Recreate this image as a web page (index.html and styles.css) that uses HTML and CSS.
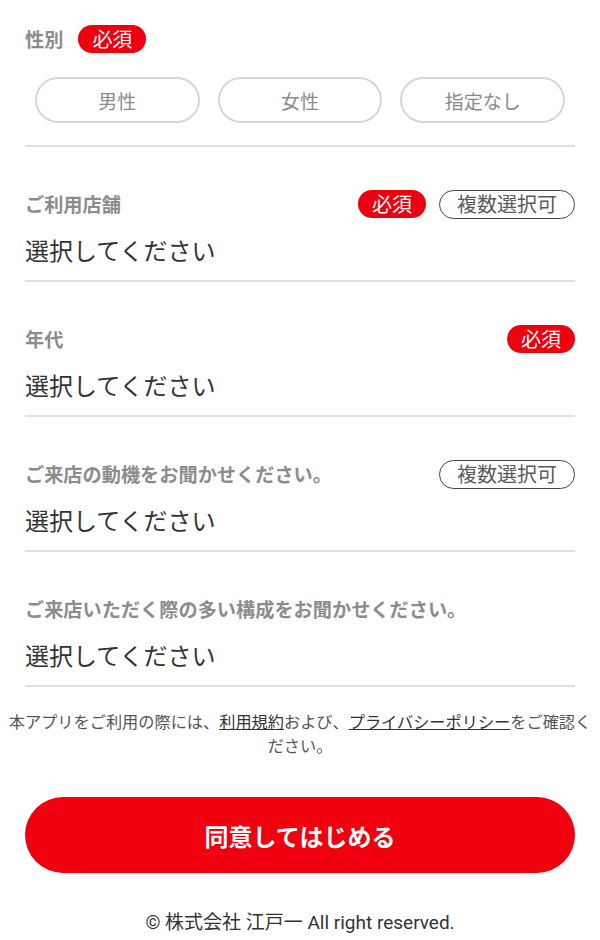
FILE: index.html
```html
<!DOCTYPE html>
<html lang="ja">
<head>
<meta charset="utf-8">
<title>登録</title>
<link rel="stylesheet" href="styles.css">
</head>
<body>
<main class="page">
  <section class="field field--gender">
    <div class="field-head field-head--inline">
      <span class="label">性別</span>
      <span class="badge badge--req">必須</span>
    </div>
    <div class="choices">
      <button class="choice" type="button">男性</button>
      <button class="choice" type="button">女性</button>
      <button class="choice" type="button">指定なし</button>
    </div>
  </section>

  <section class="field">
    <div class="field-head">
      <span class="label">ご利用店舗</span>
      <span class="badges">
        <span class="badge badge--req">必須</span>
        <span class="badge badge--multi">複数選択可</span>
      </span>
    </div>
    <div class="select">選択してください</div>
  </section>

  <section class="field">
    <div class="field-head">
      <span class="label">年代</span>
      <span class="badges">
        <span class="badge badge--req">必須</span>
      </span>
    </div>
    <div class="select">選択してください</div>
  </section>

  <section class="field">
    <div class="field-head">
      <span class="label">ご来店の動機をお聞かせください。</span>
      <span class="badges">
        <span class="badge badge--multi">複数選択可</span>
      </span>
    </div>
    <div class="select">選択してください</div>
  </section>

  <section class="field">
    <div class="field-head">
      <span class="label">ご来店いただく際の多い構成をお聞かせください。</span>
    </div>
    <div class="select">選択してください</div>
  </section>

  <p class="terms">本アプリをご利用の際には、<a href="#" class="link">利用規約</a>および、<a href="#" class="link">プライバシーポリシー</a>をご確認ください。</p>

  <div class="actions">
    <button class="primary" type="button">同意してはじめる</button>
  </div>

  <footer class="footer">© 株式会社 江戸一 All right reserved.</footer>
</main>
</body>
</html>
```

FILE: styles.css
```css
* {
  box-sizing: border-box;
}

html, body {
  margin: 0;
  padding: 0;
  background: #ffffff;
}

body {
  font-family: "Noto Sans CJK JP", "Noto Sans", Roboto, sans-serif;
  color: #333333;
}

.page {
  width: 600px;
  padding: 25px 0 0;
}

.field {
  margin: 0 25px;
  padding-top: 43px;
  border-bottom: 2px solid #dedede;
}

.field--gender {
  padding-top: 0;
  padding-bottom: 22px;
}

.field-head {
  display: flex;
  align-items: center;
  justify-content: space-between;
  height: 28px;
}

.field-head--inline {
  justify-content: flex-start;
  gap: 15px;
}

.label {
  font-size: 19.2px;
  font-weight: 700;
  color: #8c8c8c;
  line-height: 28px;
  white-space: nowrap;
}

.badges {
  display: flex;
  align-items: center;
  gap: 13px;
}

.badge {
  display: inline-flex;
  align-items: center;
  justify-content: center;
  border-radius: 999px;
  white-space: nowrap;
}

.badge--req {
  height: 28px;
  padding: 0 14px;
  background: #ec0010;
  color: #ffffff;
  font-size: 20px;
  line-height: 1;
}

.badge--multi {
  height: 29px;
  padding: 0 17px;
  border: 1.5px solid #454545;
  color: #5a5a5a;
  font-size: 20px;
  line-height: 1;
}

.choices {
  display: grid;
  grid-template-columns: repeat(3, 1fr);
  gap: 18px;
  padding: 0 10px;
  margin-top: 24px;
}

.choice {
  height: 46px;
  border: 2px solid #d6d6d6;
  border-radius: 23px;
  background: #ffffff;
  font-family: inherit;
  font-size: 19px;
  color: #8a8a8a;
  padding: 0;
}

.select {
  padding: 8px 0 6px;
  font-size: 24px;
  line-height: 48px;
  color: #333333;
}

.terms {
  margin: 22px 6px 0;
  font-size: 16.2px;
  line-height: 24px;
  text-align: center;
  color: #555555;
}

.link {
  color: #333333;
  text-decoration: underline;
}

.actions {
  padding: 40px 25px 0;
}

.primary {
  display: block;
  width: 100%;
  height: 76px;
  border: none;
  border-radius: 38px;
  background: #f0000f;
  color: #ffffff;
  font-family: inherit;
  font-size: 24px;
  font-weight: 700;
}

.footer {
  margin-top: 35px;
  font-family: Roboto, "Noto Sans CJK JP", sans-serif;
  font-size: 19px;
  line-height: 30px;
  text-align: center;
  color: #333333;
}
```
